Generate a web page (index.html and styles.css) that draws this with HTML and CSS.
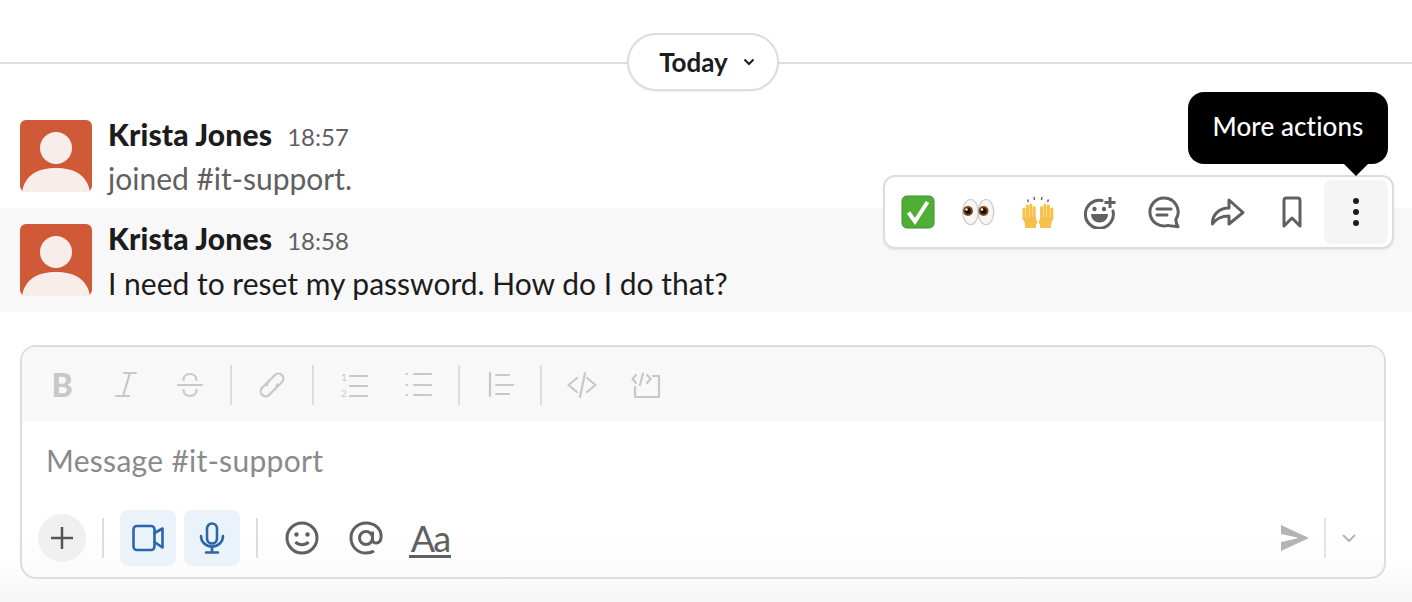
FILE: index.html
```html
<!DOCTYPE html>
<html lang="en">
<head>
<meta charset="utf-8">
<title>#it-support</title>
<link rel="stylesheet" href="styles.css">
</head>
<body>
<main class="page">
  <div class="day">
    <button class="day-pill"><span>Today</span>
      <svg class="day-chev" viewBox="0 0 12 8"><path d="M1.500 1.500 6 6l4.500-4.500"/></svg>
    </button>
  </div>

  <article class="msg">
    <svg class="avatar" viewBox="0 0 72 72"><rect width="72" height="72" rx="6" fill="#d05a37"/><circle cx="36" cy="28" r="16" fill="#f8ede9"/><path d="M2 72C5 54 19 48 36 48s31 6 34 24z" fill="#f8ede9"/></svg>
    <div class="msg-body">
      <div class="msg-head"><strong class="name">Krista Jones</strong><time class="time">18:57</time></div>
      <p class="text muted">joined #it-support.</p>
    </div>
  </article>
  <article class="msg hover">
    <svg class="avatar" viewBox="0 0 72 72"><rect width="72" height="72" rx="6" fill="#d05a37"/><circle cx="36" cy="28" r="16" fill="#f8ede9"/><path d="M2 72C5 54 19 48 36 48s31 6 34 24z" fill="#f8ede9"/></svg>
    <div class="msg-body">
      <div class="msg-head"><strong class="name">Krista Jones</strong><time class="time">18:58</time></div>
      <p class="text">I need to reset my password. How do I do that?</p>
    </div>
  </article>

  <div class="actions">
    <button class="act emoji"><svg viewBox="0 0 34 34"><rect x="1" y="1" width="32" height="32" rx="5" fill="#4fae36" stroke="#3c9128"/><path d="M7.500 17.500 14 26.500 26.500 7" fill="none" stroke="#fff" stroke-width="4"/></svg></button>
    <button class="act emoji"><svg viewBox="0 0 34 34"><ellipse cx="9.500" cy="17" rx="7.800" ry="12.500" fill="#f6f6f6" stroke="#c9c9c9" stroke-width="1.200"/><ellipse cx="25" cy="17" rx="7.800" ry="12.500" fill="#f6f6f6" stroke="#c9c9c9" stroke-width="1.200"/><circle cx="7" cy="16" r="5" fill="#7a4a14"/><circle cx="22.500" cy="16" r="5" fill="#7a4a14"/><circle cx="7" cy="16" r="3" fill="#1d1007"/><circle cx="22.500" cy="16" r="3" fill="#1d1007"/><circle cx="5.500" cy="14.500" r="1.200" fill="#fff"/><circle cx="21" cy="14.500" r="1.200" fill="#fff"/></svg></button>
    <button class="act emoji"><svg viewBox="0 0 34 34"><g class="hand"><path d="M3 24V14M6.400 24V11M9.800 24V10M13.200 24V12.500"/><path d="M30.800 24V14M27.400 24V11M24 24V10M20.600 24V12.500"/></g><path d="M1.500 22h13l2 5.500-1.500 2V33H4V29z" class="palm"/><path d="M32.500 22h-13l-2 5.500 1.500 2V33h11V29z" class="palm"/><path d="M6.500 4.500l1 2.500M13 2l.5 3M21 2l-.5 3M27.500 4.500l-1 2.500" class="spark"/></svg></button>
    <button class="act"><svg viewBox="0 0 34 34" class="line"><path d="M19 5.500A14 14 0 1 0 30 16"/><path d="M27 2v11M21.500 7.500h11" stroke-linecap="butt"/><circle cx="11.500" cy="14" r="2.200" class="dot"/><circle cx="21" cy="14" r="2.200" class="dot"/><path d="M8 19h17c0 5-4 8.500-8.500 8.500S8 24 8 19z" class="dot"/></svg></button>
    <button class="act"><svg viewBox="0 0 34 34" class="line"><path d="M17 3a14 14 0 1 0 4 27.400c3 .6 6 .8 10 1.300-1.500-2.500-2-4-2.200-7A14 14 0 0 0 17 3z"/><path d="M10 14h14M10 20h10"/></svg></button>
    <button class="act"><svg viewBox="0 0 34 34" class="line"><path d="M1.500 29C1 20 8 13 18 13V5l14 12.500L18 29v-8C9 21 5 24 1.500 29z"/></svg></button>
    <button class="act"><svg viewBox="0 0 34 34" class="line"><path d="M9 31V5.500A2.500 2.500 0 0 1 11.500 3h11A2.500 2.500 0 0 1 25 5.500V31l-8-8z"/></svg></button>
    <button class="act act-on"><svg viewBox="0 0 34 34"><circle cx="17" cy="6" r="3" fill="#1d1c1d"/><circle cx="17" cy="17" r="3" fill="#1d1c1d"/><circle cx="17" cy="28" r="3" fill="#1d1c1d"/></svg></button>
  </div>
  <div class="tooltip">More actions</div>

  <section class="composer">
    <div class="format">
      <span class="bold-b">B</span>
      <svg class="f" viewBox="0 0 32 32"><path d="M14 4h12M6 27h13M20 4l-7 23"/></svg>
      <svg class="f" viewBox="0 0 32 32"><path d="M22.500 11c0-4-3-6-6.500-6s-6.500 2-6.500 6M4 16h24M9.500 21c0 4 3 6 6.500 6s6.500-2 6.500-6"/></svg>
      <i class="sep"></i>
      <svg class="f" viewBox="0 0 32 32"><g transform="rotate(-45 16 16)"><path d="M17 11H7a5 5 0 0 0 0 10h9a5 5 0 0 0 4-2"/><path d="M15 21h10a5 5 0 0 0 0-10h-9a5 5 0 0 0-4 2"/></g></svg>
      <i class="sep"></i>
      <svg class="f" viewBox="0 0 32 32"><path d="M12 7h17M12 17h17M12 27h17"/><text x="3" y="12" class="num">1</text><text x="3" y="28" class="num">2</text></svg>
      <svg class="f" viewBox="0 0 32 32"><path d="M12 5h17M12 16h17M12 26h17M4.500 5h.5M4.500 16h.5M4.500 26h.5"/></svg>
      <i class="sep"></i>
      <svg class="f" viewBox="0 0 32 32"><path d="M6 4v23M12 6h13M12 16h17M12 25h13"/></svg>
      <i class="sep"></i>
      <svg class="f" viewBox="0 0 32 32"><path d="M11 9 2.500 16l8.500 7M21 9l8.500 7-8.500 7M19 4l-5 24"/></svg>
      <svg class="f" viewBox="0 0 32 32"><path d="M23 7h6v21H5V18M6 6 2.500 10 6 14M17 6l3.500 4L17 14M13 4.500 10 16"/></svg>
    </div>
    <div class="input">Message #it-support</div>
    <div class="tools">
      <button class="plus"><svg viewBox="0 0 24 24"><path d="M12 1v22M1 12h22"/></svg></button>
      <i class="sep2"></i>
      <button class="media"><svg viewBox="0 0 32 28"><rect x="1.500" y="2" width="21" height="24" rx="3.500"/><path d="M22.500 9 30.500 4.500v19L22.500 18"/></svg></button>
      <button class="media"><svg viewBox="0 0 28 32"><rect x="9" y="1.500" width="10" height="20" rx="5"/><path d="M3 14c0 6 5 10.500 11 10.500S25 20 25 14M14 25v5M8 30.500h12"/></svg></button>
      <i class="sep2"></i>
      <button class="tool"><svg viewBox="0 0 34 34"><circle cx="17" cy="17" r="15"/><circle cx="11.500" cy="13.500" r="2.200" class="dot"/><circle cx="22.500" cy="13.500" r="2.200" class="dot"/><path d="M10.500 21c3 3.500 10 3.500 13 0"/></svg></button>
      <button class="tool"><svg viewBox="0 0 34 34"><circle cx="17" cy="17" r="6.500"/><path d="M23.500 10.500v8c0 5 7.500 5 8.500-1.500C33 8 26 2 17 2 8.500 2 2 8.500 2 17s6.500 15 15 15c3 0 6-.7 8-2"/></svg></button>
      <span class="aa">Aa</span>
      <span class="spacer"></span>
      <svg class="send" viewBox="0 0 30 28"><path d="M1 1 29 14 1 27v-9l16-3.500v-1L1 10z"/></svg>
      <i class="sep3"></i>
      <svg class="send-chev" viewBox="0 0 14 8"><path d="M1 1l6 6 6-6"/></svg>
    </div>
  </section>
</main>
</body>
</html>
```
FILE: styles.css
```css
* { box-sizing: border-box; }
html, body { margin: 0; height: 602px; overflow: hidden; background: #fff; }
body { font-family: Lato, "Liberation Sans", sans-serif; color: #1d1c1d; }
button { font: inherit; color: inherit; border: 0; padding: 0; background: none; }
svg { display: block; }
.page {
  position: relative; width: 1412px; height: 602px; overflow: hidden;
  display: flex; flex-direction: column;
  background: linear-gradient(#fff 560px, #f6f6f6 602px);
}
.day { height: 112px; padding: 33px 6px 0 0; display: flex; justify-content: center; align-items: flex-start; position: relative; flex: none; }
.day::before { content: ""; position: absolute; left: 0; right: 0; top: 62px; height: 2px; background: #dfdfdf; }
.day-pill {
  position: relative; width: 152px; height: 58px; border-radius: 29px; background: #fff;
  border: 2px solid #dddddd; box-shadow: 0 1px 2px rgba(0,0,0,.06);
  display: flex; align-items: center; justify-content: center; gap: 15px;
  font-size: 26px; font-weight: 700; padding-left: 8px;
}
.day-chev { width: 12px; height: 8px; fill: none; stroke: #1d1c1d; stroke-width: 2; }
.msg { height: 96px; padding: 8px 20px 0; display: flex; gap: 16px; flex: none; }
.msg.hover { height: 104px; padding-top: 16px; background: #f8f8f8; }
.avatar { width: 72px; height: 72px; flex: none; }
.msg-body { display: flex; flex-direction: column; margin-top: -1px; }
.msg-head { display: flex; align-items: baseline; gap: 15px; height: 30px; line-height: 30px; }
.name { font-size: 30px; font-weight: 900; letter-spacing: .15px; }
.time { font-size: 24px; color: #616061; }
.text { margin: 14px 0 0; font-size: 30px; line-height: 30px; }
.hover .text { margin-top: 15px; }
.muted { color: #616061; }
.actions {
  position: absolute; left: 883px; top: 175px; width: 511px; height: 74px;
  background: #fff; border: 2px solid #dddddd; border-radius: 12px;
  box-shadow: 0 1px 2px rgba(0,0,0,.08);
  display: flex; padding: 3px;
}
.act { width: 64px; height: 64px; flex: none; border-radius: 8px; display: flex; align-items: center; justify-content: center; }
.act.emoji { width: 60px; }
.act svg { width: 34px; height: 34px; }
.act-on { background: #f5f5f5; }
.hand { fill: none; stroke: #f7c04a; stroke-width: 3; stroke-linecap: round; }
.palm { fill: #f7c04a; }
.spark { fill: none; stroke: #666; stroke-width: 1.500; }
.line, .f, .media svg, .tool svg { fill: none; }
.line { stroke: #616061; stroke-width: 3; stroke-linejoin: round; stroke-linecap: round; }
.line .dot { fill: #616061; stroke: none; }
.tooltip {
  position: absolute; left: 1188px; top: 92px; width: 200px; height: 72px;
  background: #000; color: #fff; border-radius: 16px;
  display: flex; align-items: center; justify-content: center;
  font-size: 26px; font-weight: 500; letter-spacing: .1px; padding-bottom: 4px;
}
.tooltip::after {
  content: ""; position: absolute; left: 156px; top: 72px;
  border: 12px solid transparent; border-bottom: 0; border-top-color: #000;
}
.composer {
  margin: 33px 26px 0 20px; height: 234px; flex: none;
  border: 2px solid #dddddd; border-radius: 16px;
  background: linear-gradient(#fff 190px, #fafafa 234px);
  overflow: hidden; display: flex; flex-direction: column;
}
.format {
  height: 75px; background: #f8f8f8; flex: none;
  display: flex; align-items: center; padding: 0 0 0 24px; gap: 32px;
}
.f { width: 32px; height: 32px; flex: none; stroke: #c8c8c8; stroke-width: 2.200; stroke-linecap: round; stroke-linejoin: round; }
.num { font: 10px Lato, sans-serif; fill: #c8c8c8; stroke: none; }
.bold-b { width: 32px; height: 32px; flex: none; text-align: center; font-size: 32px; font-weight: 900; line-height: 32px; color: #c8c8c8; }
.sep { width: 2px; height: 40px; background: #dddddd; flex: none; margin: 0 -8px; }
.input { padding: 20px 24px 0; font-size: 30px; letter-spacing: .3px; line-height: 36px; color: #8b8a8b; height: 88px; flex: none; }
.tools { display: flex; align-items: center; padding: 0 28px 0 16px; height: 56px; flex: none; }
.plus { width: 48px; height: 48px; border-radius: 50%; background: #f0f0f0; display: flex; align-items: center; justify-content: center; flex: none; }
.plus svg { width: 24px; height: 24px; fill: none; stroke: #555; stroke-width: 2.500; }
.sep2 { width: 2px; height: 40px; background: #dddddd; margin: 0 16px; flex: none; }
.media { width: 56px; height: 56px; border-radius: 8px; background: #e9f3f9; display: flex; align-items: center; justify-content: center; flex: none; }
.media + .media { margin-left: 8px; }
.media svg { width: 32px; height: 32px; stroke: #2b66a8; stroke-width: 2.600; stroke-linejoin: round; stroke-linecap: round; }
.tool { width: 34px; height: 34px; flex: none; margin: 0 15px; }
.sep2 + .tool { margin-left: 11px; }
.tool svg { width: 34px; height: 34px; stroke: #616061; stroke-width: 3; }
.tool .dot { fill: #616061; stroke: none; }
.aa { width: 42px; height: 37px; margin: 2px 0 0 11px; font-size: 36px; letter-spacing: -2px; text-align: center; line-height: 34px; color: #616061; border-bottom: 3px solid #616061; font-weight: 400; }
.spacer { flex: 1; }
.send { width: 30px; height: 28px; fill: #b4b4b4; flex: none; }
.sep3 { width: 2px; height: 40px; background: #e3e3e3; margin: 0 16px 0 14px; flex: none; }
.send-chev { width: 14px; height: 8px; fill: none; stroke: #b4b4b4; stroke-width: 2; flex: none; }
```
